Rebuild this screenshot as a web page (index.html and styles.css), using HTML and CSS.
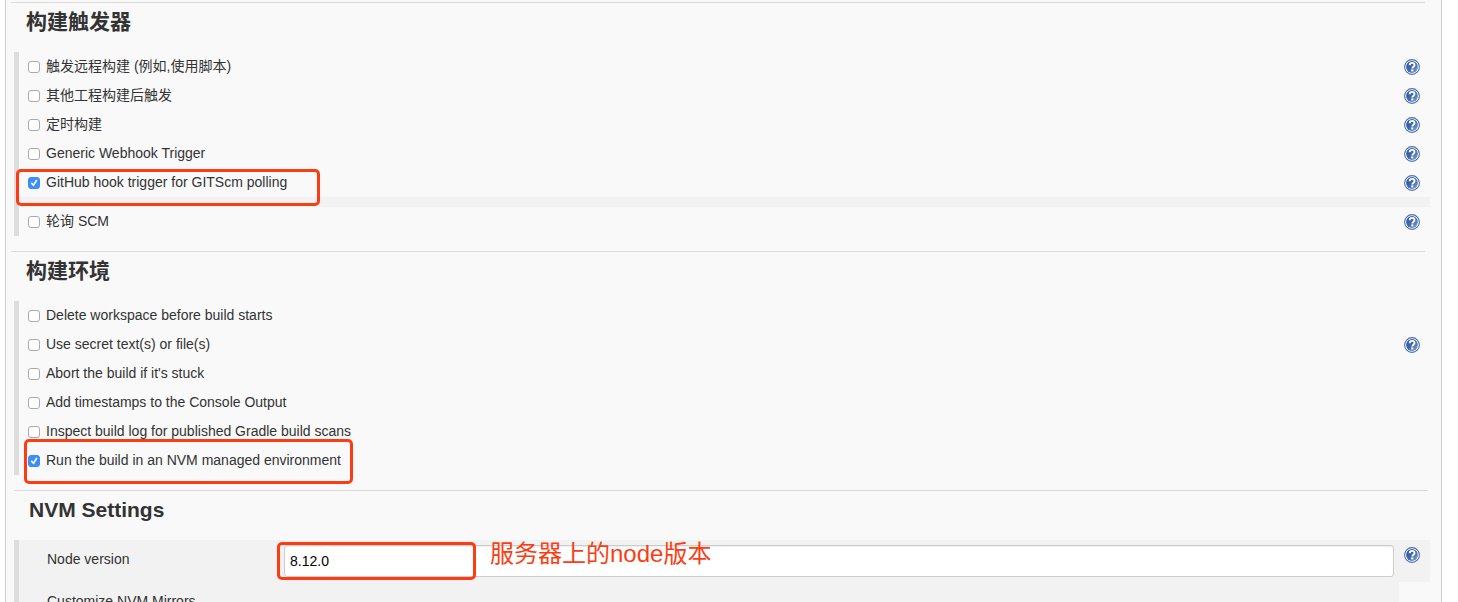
FILE: index.html
```html
<!DOCTYPE html>
<html lang="zh-CN">
<head>
<meta charset="utf-8">
<title>构建触发器</title>
<link rel="stylesheet" href="styles.css">
</head>
<body>
<svg class="sprite" aria-hidden="true">
  <defs>
    <linearGradient id="blue" x1="0" y1="0" x2="1" y2="1">
      <stop offset="0" stop-color="#2a5297"/>
      <stop offset="0.5" stop-color="#3f69aa"/>
      <stop offset="1" stop-color="#8aa8d4"/>
    </linearGradient>
    <symbol id="help" viewBox="0 0 16 16">
      <circle cx="8" cy="8" r="7.4" fill="#fff" stroke="#4a70ae" stroke-width="1.1"/>
      <circle cx="8" cy="8" r="5.9" fill="url(#blue)"/>
      <path d="M5.700 6.200C5.700 4.700 6.700 3.900 8.100 3.900s2.400.8 2.400 2.100c0 1.700-2.200 1.600-2.200 3.400" fill="none" stroke="#fff" stroke-width="1.9"/>
      <path d="M7.200 10.400h2.100v2h-2.100z" fill="#fff"/>
    </symbol>
  </defs>
</svg>
<main class="panel">
  <section class="section">
    <h2 class="title">构建触发器</h2>
    <div class="group">
      <div class="row"><label class="option"><input type="checkbox">触发远程构建 (例如,使用脚本)</label><a class="help" href="#" aria-label="Help"><svg><use href="#help"/></svg></a></div>
      <div class="row"><label class="option"><input type="checkbox">其他工程构建后触发</label><a class="help" href="#" aria-label="Help"><svg><use href="#help"/></svg></a></div>
      <div class="row"><label class="option"><input type="checkbox">定时构建</label><a class="help" href="#" aria-label="Help"><svg><use href="#help"/></svg></a></div>
      <div class="row"><label class="option"><input type="checkbox">Generic Webhook Trigger</label><a class="help" href="#" aria-label="Help"><svg><use href="#help"/></svg></a></div>
      <div class="row"><label class="option"><input type="checkbox" checked>GitHub hook trigger for GITScm polling</label><a class="help" href="#" aria-label="Help"><svg><use href="#help"/></svg></a><span class="mark mark-hook"></span></div>
      <div class="strip"></div>
      <div class="row"><label class="option"><input type="checkbox">轮询 SCM</label><a class="help" href="#" aria-label="Help"><svg><use href="#help"/></svg></a></div>
    </div>
  </section>
  <section class="section">
    <h2 class="title">构建环境</h2>
    <div class="group">
      <div class="row"><label class="option"><input type="checkbox">Delete workspace before build starts</label></div>
      <div class="row"><label class="option"><input type="checkbox">Use secret text(s) or file(s)</label><a class="help" href="#" aria-label="Help"><svg><use href="#help"/></svg></a></div>
      <div class="row"><label class="option"><input type="checkbox">Abort the build if it's stuck</label></div>
      <div class="row"><label class="option"><input type="checkbox">Add timestamps to the Console Output</label></div>
      <div class="row"><label class="option"><input type="checkbox">Inspect build log for published Gradle build scans</label></div>
      <div class="row"><label class="option"><input type="checkbox" checked>Run the build in an NVM managed environment</label><span class="mark mark-nvm"></span></div>
    </div>
  </section>
  <section class="section section-nested">
    <h2 class="title">NVM Settings</h2>
    <div class="group">
      <div class="field">
        <label class="field-label" for="node">Node version</label>
        <div class="field-control">
          <input class="text" id="node" type="text" value="8.12.0">
          <span class="mark mark-version"></span>
          <span class="note">服务器上的node版本</span>
        </div>
        <a class="help" href="#" aria-label="Help"><svg><use href="#help"/></svg></a>
      </div>
      <div class="field field-short"><span class="field-label">Customize NVM Mirrors</span></div>
    </div>
  </section>
</main>
</body>
</html>
```
FILE: styles.css
```css
* {
  box-sizing: border-box;
}

body {
  height: 100vh;
  margin: 0;
  overflow: hidden;
  background: #fff;
  color: #333;
  font: 14px/20px "Liberation Sans", "Noto Sans CJK SC", sans-serif;
}

.sprite {
  position: absolute;
  width: 0;
  height: 0;
}

.panel {
  min-height: 100vh;
  margin: 0 16px 0 5px;
  padding: 2px 11px 0 8px;
  border: 1px solid #ccc;
  border-width: 0 1px;
  background: #f9f9f9;
}

.section {
  padding-bottom: 15px;
}

.title {
  height: 50px;
  margin: 0 5px 0 -3px;
  padding: 4px 15px;
  border-top: 1px solid #ddd;
  font-size: 21px;
  line-height: 30px;
}

.section-nested .title {
  margin: 0 2px 0 0;
}

.group {
  border-left: 5px solid #ddd;
}

.row {
  position: relative;
  display: flex;
  justify-content: space-between;
  height: 29px;
  padding: 4px 10px 0 9px;
}

.option {
  display: flex;
  gap: 6px;
}

.option input {
  appearance: none;
  display: grid;
  place-items: center;
  width: 12px;
  height: 12px;
  margin: 5px 0 0;
  border: 1px solid #aaa;
  border-radius: 3px;
  background: #fff;
}

.option input:checked {
  border-color: #3b8df8;
  background: #3b8df8;
}

.option input:checked::after {
  content: "";
  width: 8px;
  height: 8px;
  background: #fff;
  clip-path: polygon(8% 55%, 24% 40%, 42% 62%, 76% 6%, 94% 18%, 46% 94%);
}

.help {
  width: 16px;
  height: 16px;
  margin-top: 3px;
}

.help svg {
  display: block;
  width: 16px;
  height: 16px;
}

.strip {
  height: 10px;
  background: #f2f2f2;
}

.field {
  display: flex;
  min-height: 42px;
  padding: 5px 10px 5px 28px;
  background: #f2f2f2;
}

.field-label {
  width: 237px;
  padding-top: 4px;
}

.field-short {
  margin-right: 31px;
}

.field-control {
  position: relative;
  flex: 1;
  margin-right: 10px;
}

.text {
  display: block;
  width: 100%;
  height: 32px;
  padding: 0 5px;
  border: 1px solid #ccc;
  border-radius: 3px;
  background: #fff;
  box-shadow: inset 0 1px 1px #eee;
  color: #000;
  font: inherit;
}

.field .help {
  margin-top: 2px;
}

.mark {
  position: absolute;
  border: 3px solid #fc3d13;
  border-radius: 5px;
  pointer-events: none;
}

.mark-hook {
  top: 1px;
  left: -3px;
  width: 304px;
  height: 37px;
  z-index: 1;
}

.mark-nvm {
  top: -7px;
  left: 5px;
  width: 329px;
  height: 45px;
}

.mark-version {
  top: -3px;
  left: -7px;
  width: 199px;
  height: 38px;
}

.note {
  position: absolute;
  top: -6px;
  left: 206px;
  color: #fc3d13;
  font-size: 24px;
  line-height: 30px;
  white-space: nowrap;
}
```
